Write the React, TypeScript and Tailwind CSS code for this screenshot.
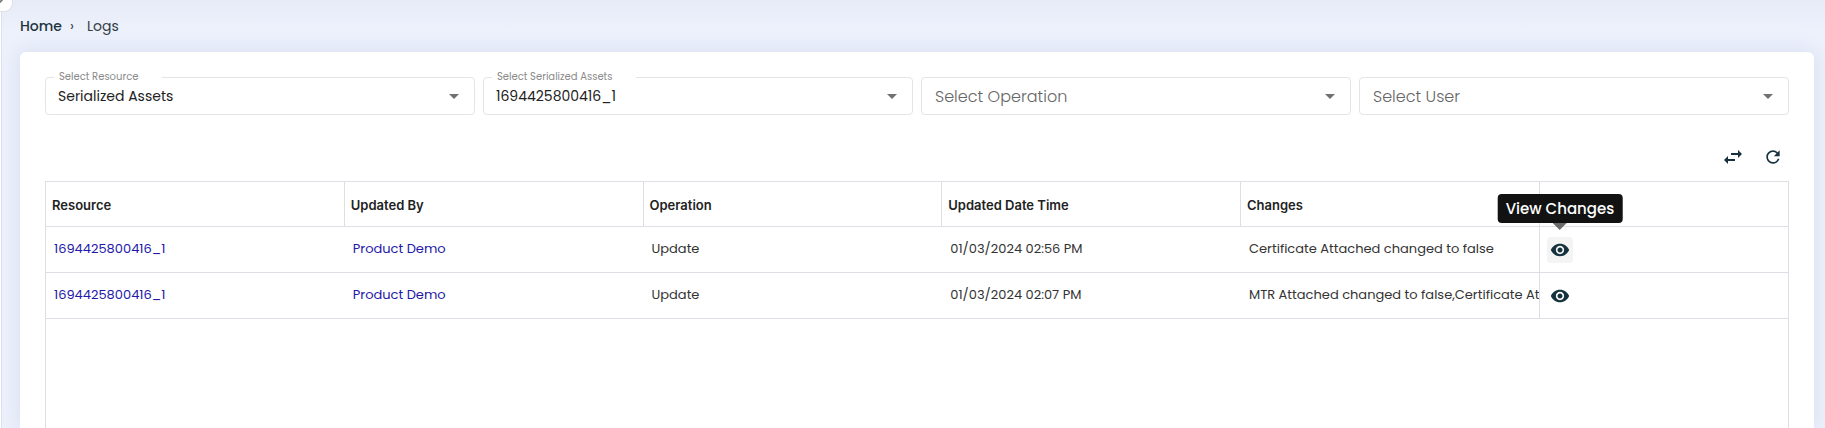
import { useId, useState } from "react";
import { MdArrowDropDown, MdRefresh, MdSwapHoriz, MdVisibility } from "react-icons/md";

type FilterProps = {
  label: string;
  options: string[];
  initial?: string;
};

function Filter({ label, options, initial = "" }: FilterProps) {
  const id = useId();
  const [value, setValue] = useState(initial);
  const filled = value !== "";

  return (
    <div className="relative min-w-0 flex-1">
      {filled && (
        <label
          htmlFor={id}
          className="absolute -top-2 left-[9px] bg-white pr-6 pl-[5px] text-[10px] leading-4 text-[#8a8a8a]"
        >
          {label}
        </label>
      )}
      <select
        id={id}
        aria-label={label}
        value={value}
        onChange={(event) => setValue(event.target.value)}
        className={
          filled
            ? "block h-[38px] w-full appearance-none rounded border border-[#e4e4e4] bg-white pr-10 pl-3 text-[14px] text-[#222222]"
            : "block h-[38px] w-full appearance-none rounded border border-[#e4e4e4] bg-white pt-0.5 pr-10 pl-[13px] text-[16px] font-light text-[#666666]"
        }
      >
        <option value="">{label}</option>
        {options.map((option) => (
          <option key={option} value={option}>
            {option}
          </option>
        ))}
      </select>
      <MdArrowDropDown
        aria-hidden="true"
        className="pointer-events-none absolute top-[7px] right-[9px] size-6 text-[#707070]"
      />
    </div>
  );
}

const columns = ["Resource", "Updated By", "Operation", "Updated Date Time", "Changes"];

const rows = [
  {
    resource: "1694425800416_1",
    user: "Product Demo",
    operation: "Update",
    date: "01/03/2024 02:56 PM",
    changes: "Certificate Attached changed to false",
    hovered: true,
  },
  {
    resource: "1694425800416_1",
    user: "Product Demo",
    operation: "Update",
    date: "01/03/2024 02:07 PM",
    changes: "MTR Attached changed to false,Certificate Attached changed to false",
    hovered: false,
  },
];

const cell = "h-[46px] truncate border-b border-[#dddfe4] px-2 pb-0.5 text-left";

export default function App() {
  return (
    <div className="relative flex min-h-screen flex-col overflow-hidden bg-white pl-px font-['Poppins','Inter',sans-serif] text-[13px] text-[#333333]">
      <div className="flex flex-1 flex-col border-l border-[#dde1ee] bg-[#edf1fc] bg-linear-to-b from-[#e7ebf7] to-[#edf1fc] to-[32px] pr-[11px] pl-[18px]">
        <nav aria-label="Breadcrumb" className="flex h-[52px] items-center text-[14px] text-[#333d45]">
          <a href="#home" className="font-medium text-[#1d3440]">
            Home
          </a>
          <span aria-hidden="true" className="ml-2 w-[17px]">
            ›
          </span>
          <span>Logs</span>
        </nav>

        <main className="flex flex-1 flex-col rounded-t-md bg-white px-[25px] pt-[25px] shadow-[0_0_20px_rgba(160,172,210,0.3)]">
          <div className="flex gap-2">
            <Filter label="Select Resource" initial="Serialized Assets" options={["Serialized Assets"]} />
            <Filter label="Select Serialized Assets" initial="1694425800416_1" options={["1694425800416_1"]} />
            <Filter label="Select Operation" options={["Create", "Update", "Delete"]} />
            <Filter label="Select User" options={["Product Demo"]} />
          </div>

          <div className="flex h-[66px] items-end justify-end gap-4 pr-1 pb-3 text-[#17323f]">
            <button type="button" aria-label="Swap" className="grid size-6 place-items-center">
              <MdSwapHoriz className="size-6" />
            </button>
            <button type="button" aria-label="Refresh" className="grid size-6 place-items-center">
              <MdRefresh className="size-5" />
            </button>
          </div>

          <div className="flex-1 border-x border-t border-[#dddfe4]">
            <table className="w-full table-fixed border-separate border-spacing-0">
              <colgroup>
                <col className="w-[17.15%]" />
                <col className="w-[17.15%]" />
                <col className="w-[17.15%]" />
                <col className="w-[17.15%]" />
                <col />
                <col className="w-[248px]" />
              </colgroup>
              <thead>
                <tr className="h-[45px]">
                  {columns.map((name) => (
                    <th
                      key={name}
                      scope="col"
                      className="border-r border-b border-[#dddfe4] pt-1 pl-1.5 text-left font-['Inter',sans-serif] font-semibold text-[#222222]"
                    >
                      {name}
                    </th>
                  ))}
                  <th scope="col" aria-label="Actions" className="border-b border-[#dddfe4]" />
                </tr>
              </thead>
              <tbody>
                {rows.map((row) => (
                  <tr key={row.date}>
                    <td className={cell}>
                      <a href="#resource" className="text-[#2418a8]">
                        {row.resource}
                      </a>
                    </td>
                    <td className={cell}>
                      <a href="#user" className="text-[#2418a8]">
                        {row.user}
                      </a>
                    </td>
                    <td className={cell}>{row.operation}</td>
                    <td className={cell}>{row.date}</td>
                    <td className="h-[46px] overflow-hidden border-r border-b border-[#dddfe4] pb-0.5 pl-2 whitespace-nowrap">
                      {row.changes}
                    </td>
                    <td className="h-[46px] border-b border-[#dddfe4] pl-[7px]">
                      <div className="relative flex w-[26px]">
                        <button
                          type="button"
                          aria-label="View Changes"
                          className={
                            row.hovered
                              ? "grid size-[26px] place-items-center rounded bg-[#f4f4f4] text-[#17323f]"
                              : "grid size-[26px] place-items-center rounded text-[#17323f]"
                          }
                        >
                          <MdVisibility className="size-5" />
                        </button>
                        {row.hovered && (
                          <div
                            role="tooltip"
                            className="absolute bottom-full left-1/2 mb-[7px] flex -translate-x-1/2 flex-col items-center"
                          >
                            <span className="rounded bg-[#121212] px-2 py-[3px] text-[15px] leading-[23px] font-medium whitespace-nowrap text-white">
                              View Changes
                            </span>
                            <span className="h-0 w-0 border-x-[7px] border-t-[7px] border-x-transparent border-t-[#6b6b6b]" />
                          </div>
                        )}
                      </div>
                    </td>
                  </tr>
                ))}
              </tbody>
            </table>
          </div>
        </main>
      </div>

      <button
        type="button"
        aria-label="Toggle sidebar"
        className="absolute -top-4 -left-[15px] size-7 rounded-[9px] border border-[#dde1e6] bg-white"
      >
        <svg viewBox="0 0 26 26" className="size-full" fill="none" stroke="#707070" strokeWidth="1.6">
          <path d="M13 8l5 5-5 5" />
        </svg>
      </button>
    </div>
  );
}
